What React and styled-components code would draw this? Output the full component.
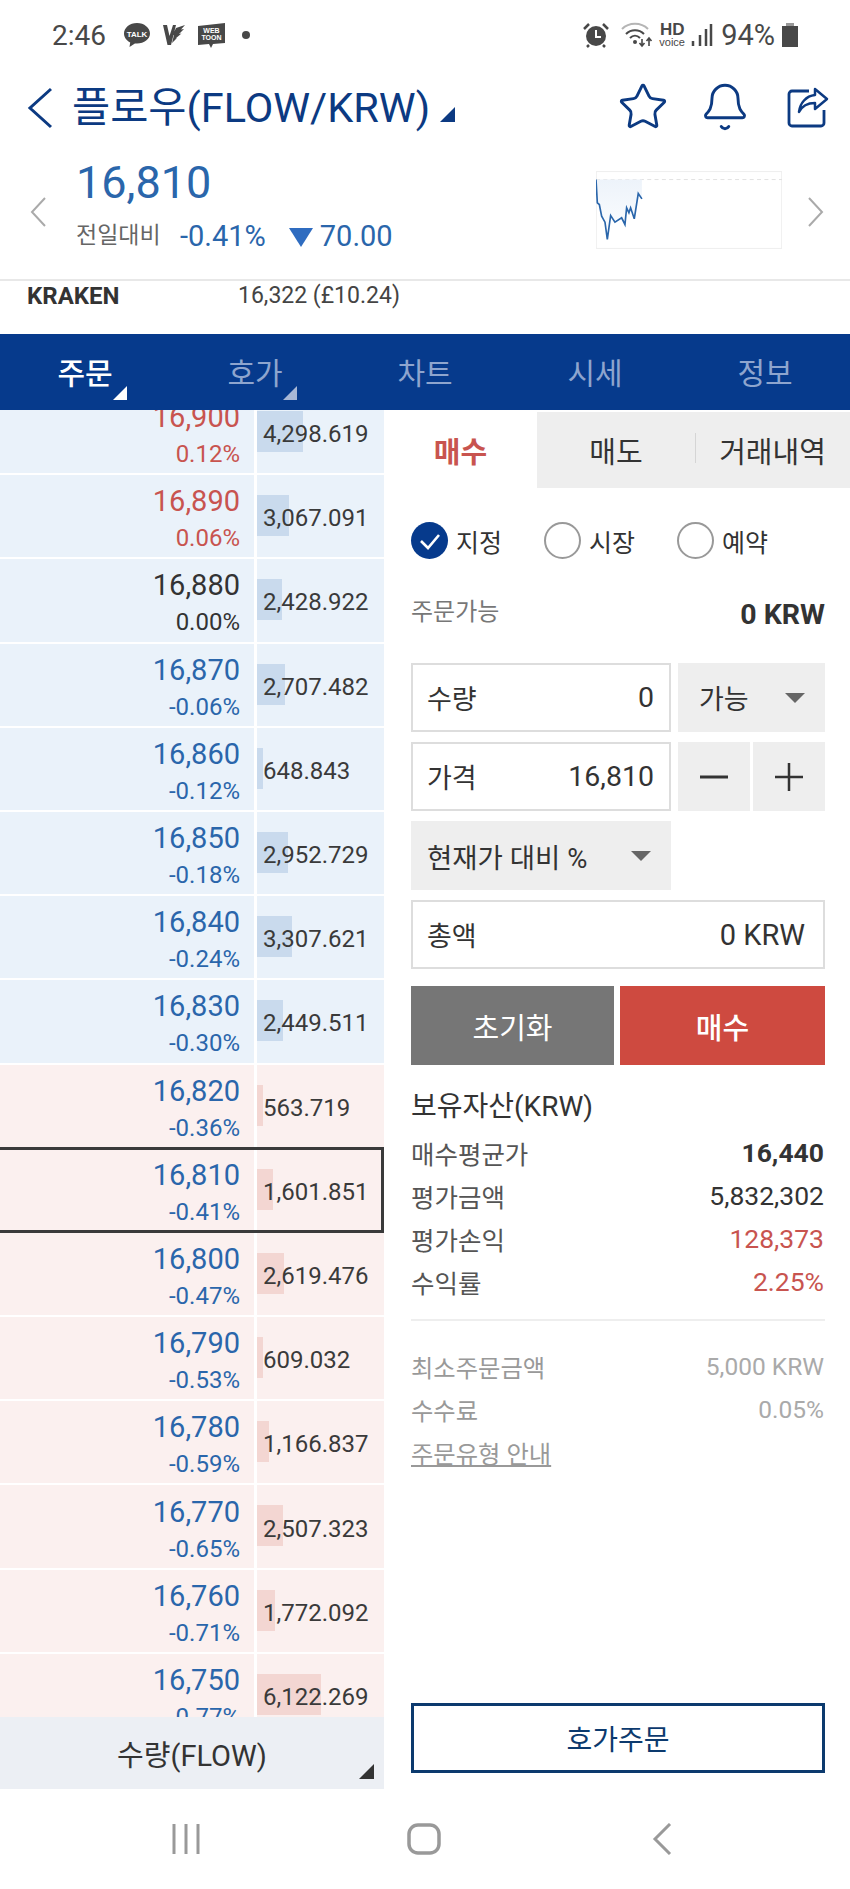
import React from 'react';
import styled, { createGlobalStyle } from 'styled-components';
import { Star, Bell } from 'lucide-react';

const NAVY = '#063a8c';
const BLUE = '#2a66ab';
const RED = '#c8544f';
const FONT = `Roboto, "Noto Sans CJK KR", sans-serif`;

const GlobalStyle = createGlobalStyle`
  html, body { margin: 0; padding: 0; background: #fff; }
  body { font-family: ${FONT}; color: #333; }
  * { box-sizing: border-box; }
`;

const Page = styled.div`
  width: 850px;
  height: 1889px;
  overflow: hidden;
  display: flex;
  flex-direction: column;
  background: #fff;
`;

/* status bar */
const StatusBar = styled.div`
  height: 70px;
  flex: none;
  padding: 0 51px 0 52px;
  display: flex;
  align-items: center;
  justify-content: space-between;
  color: #484848;
`;
const StatusGroup = styled.div`
  display: flex;
  align-items: center;
  gap: ${p => p.$gap || 10}px;
`;
const Clock = styled.span`
  font-size: 28px;
  width: 60px;
`;
const Battery = styled.span`
  font-size: 29px;
  margin-left: 2px;
`;
const HdBadge = styled.div`
  width: 26px;
  display: flex;
  flex-direction: column;
  align-items: center;
  line-height: 1;
  font-family: "Liberation Sans", sans-serif;
  b { font-size: 17px; line-height: 15px; }
  span { font-size: 11px; line-height: 11px; }
`;

/* title */
const TitleBar = styled.div`
  height: 75px;
  flex: none;
  padding: 0 21px 0 27px;
  display: flex;
  align-items: center;
  color: #0c3a82;
`;
const TitleText = styled.h1`
  margin: 0 0 0 19px;
  font-size: 41.5px;
  font-weight: 400;
  line-height: 1;
  white-space: nowrap;
`;
const TitleCaret = styled.span`
  width: 0;
  height: 0;
  margin: 13px 0 0 10px;
  border-left: 15px solid transparent;
  border-bottom: 15px solid #0c3a82;
`;
const TitleActions = styled.div`
  margin-left: auto;
  margin-top: -2px;
  display: flex;
  align-items: center;
  gap: 30px;
`;
const ShareIcon = styled.svg`
  margin-left: 6px;
`;

/* price summary */
const Summary = styled.div`
  height: 136px;
  flex: none;
  border-bottom: 2px solid #e8e8e8;
  padding: 0 26px 0 30px;
  display: flex;
  align-items: center;
`;
const PriceBlock = styled.div`
  margin-left: 29px;
  margin-top: -15px;
`;
const PriceNow = styled.div`
  font-size: 45px;
  line-height: 54px;
  color: ${BLUE};
`;
const PriceChange = styled.div`
  margin-top: 9px;
  display: flex;
  align-items: center;
  font-size: 29px;
  line-height: 34px;
  color: ${BLUE};
`;
const ChangeLabel = styled.span`
  font-size: 23px;
  color: #666;
  width: 104px;
`;
const DownMark = styled.span`
  width: 0;
  height: 0;
  margin: 2px 7px 0 23px;
  border-left: 12px solid transparent;
  border-right: 12px solid transparent;
  border-top: 19px solid #2f6cc0;
`;
const MiniChart = styled.svg`
  width: 186px;
  height: 78px;
  margin: 0 25px 0 auto;
  flex: none;
  position: relative;
  top: -2px;
`;

const Exchange = styled.div`
  height: 53px;
  flex: none;
  padding: 0 0 0 27px;
  display: flex;
  font-size: 23px;
  line-height: 30px;
  color: #444;
`;
const ExchangeName = styled.b`
  width: 211px;
  font-size: 24px;
  font-weight: 700;
  color: #333;
`;

/* tabs */
const MainNav = styled.nav`
  height: 76px;
  flex: none;
  background: ${NAVY};
  display: grid;
  grid-template-columns: repeat(5, 170px);
`;
const NavItem = styled.div`
  position: relative;
  display: flex;
  align-items: center;
  justify-content: center;
  font-size: 30px;
  font-weight: ${p => (p.$active ? 500 : 400)};
  color: ${p => (p.$active ? '#fff' : '#8ea5ce')};
  padding-bottom: 2px;
  &::after {
    content: '';
    display: ${p => (p.$caret ? 'block' : 'none')};
    position: absolute;
    right: 43px;
    bottom: 10px;
    width: 0;
    height: 0;
    border-left: 14px solid transparent;
    border-bottom: 14px solid ${p => (p.$active ? '#fff' : '#a8b8d6')};
  }
`;

const Main = styled.div`
  height: 1379px;
  flex: none;
  display: flex;
`;

/* order book */
const BookColumn = styled.div`
  width: 384px;
  flex: none;
  display: flex;
  flex-direction: column;
`;
const BookList = styled.div`
  flex: 1;
  min-height: 0;
  overflow: hidden;
  padding-top: 1px;
`;
const BookScroll = styled.div`
  margin-top: -20px;
  display: flex;
  flex-direction: column;
  gap: 2px;
`;
const Row = styled.div`
  position: relative;
  height: 82.2px;
  flex: none;
  display: grid;
  grid-template-columns: 254px 127px;
  column-gap: 3px;
  ${p => p.$current && `
    &::after {
      content: '';
      position: absolute;
      inset: -2px 0 -2px -4px;
      border: 3px solid #3a3a3a;
    }
  `}
`;
const PriceCell = styled.div`
  background: ${p => (p.$side === 'ask' ? '#eaf2fa' : '#fbf0ef')};
  color: ${p => ({ up: RED, flat: '#333', down: BLUE }[p.$tone])};
  padding: 8px 14px 0 0;
  text-align: right;
  display: flex;
  flex-direction: column;
  justify-content: center;
`;
const PriceValue = styled.div`
  font-size: 29px;
  line-height: 37px;
`;
const PricePct = styled.div`
  font-size: 24px;
  line-height: 37px;
`;
const QtyCell = styled.div`
  position: relative;
  background: ${p => (p.$side === 'ask' ? '#eaf2fa' : '#fbf0ef')};
  display: flex;
  align-items: center;
  padding: 4px 0 0 6px;
  font-size: 24px;
  color: #3a3a3a;
`;
const QtyBar = styled.div`
  position: absolute;
  left: 0;
  top: 20px;
  height: 41px;
  background: ${p => (p.$side === 'ask' ? '#c9daed' : '#f3d6d2')};
`;
const QtyText = styled.span`
  position: relative;
`;
const BookFooter = styled.div`
  position: relative;
  height: 72px;
  flex: none;
  background: #eceff4;
  display: flex;
  align-items: center;
  justify-content: center;
  font-size: 29px;
  color: #333;
  &::after {
    content: '';
    position: absolute;
    right: 10px;
    bottom: 10px;
    width: 0;
    height: 0;
    border-left: 15px solid transparent;
    border-bottom: 15px solid #333;
  }
`;

/* order form */
const FormColumn = styled.div`
  flex: 1;
  min-width: 0;
  display: flex;
  flex-direction: column;
`;
const Tabs = styled.div`
  height: 76px;
  flex: none;
  margin-top: 2px;
  display: grid;
  grid-template-columns: 153px 158px 155px;
`;
const Tab = styled.div`
  position: relative;
  display: flex;
  align-items: center;
  justify-content: center;
  font-size: 29px;
  background: ${p => (p.$active ? '#fff' : '#eee')};
  color: ${p => (p.$active ? RED : '#333')};
  font-weight: ${p => (p.$active ? 700 : 400)};
  ${p => p.$divided && `
    &::before {
      content: '';
      position: absolute;
      left: 0;
      top: 21px;
      height: 30px;
      width: 1px;
      background: #d5d5d5;
    }
  `}
`;
const FormBody = styled.div`
  flex: 1;
  padding: 34px 25px 16px 27px;
  display: flex;
  flex-direction: column;
`;
const RadioRow = styled.div`
  height: 36px;
  display: grid;
  grid-template-columns: 133px 133px 1fr;
`;
const RadioOption = styled.div`
  display: flex;
  align-items: center;
  gap: 8px;
  font-size: 25px;
  color: #333;
`;
const RadioMark = styled.span`
  width: 37px;
  height: 37px;
  border-radius: 50%;
  flex: none;
  border: ${p => (p.$on ? 'none' : '2px solid #999')};
  background: ${p => (p.$on ? NAVY : '#fff')};
  display: flex;
  align-items: center;
  justify-content: center;
`;
const Available = styled.div`
  height: 40px;
  margin-top: 34px;
  display: flex;
  align-items: center;
  justify-content: space-between;
  font-size: 24px;
  color: #777;
  span { margin-bottom: 6px; }
  b {
    margin-top: 4px;
    font-size: 28.5px;
    color: #333;
    font-weight: 700;
  }
`;
const FieldGrid = styled.div`
  margin-top: 31px;
  display: grid;
  grid-template-columns: 260px 147px;
  grid-auto-rows: 69px;
  gap: 10px 7px;
`;
const Field = styled.div`
  border: 2px solid #ddd;
  padding: 0 ${p => (p.$wide ? 18 : 15)}px 0 14px;
  display: flex;
  align-items: center;
  justify-content: space-between;
  font-size: 27px;
  color: #333;
  grid-column: ${p => (p.$wide ? '1 / -1' : 'auto')};
  span:last-child { font-size: ${p => (p.$wide ? 29 : 28.5)}px; }
`;
const SelectBox = styled.div`
  background: #eee;
  padding: 0 20px 0 ${p => p.$indent || 16}px;
  display: flex;
  align-items: center;
  justify-content: space-between;
  font-size: ${p => p.$size || 27.5}px;
  color: #333;
  &::after {
    content: '';
    width: 0;
    height: 0;
    border-left: 10px solid transparent;
    border-right: 10px solid transparent;
    border-top: 10px solid #666;
  }
`;
const Stepper = styled.div`
  display: grid;
  grid-template-columns: 72px 72px;
  gap: 3px;
`;
const StepButton = styled.div`
  background: #eee;
  display: flex;
  align-items: center;
  justify-content: center;
`;
const ActionRow = styled.div`
  margin-top: 17px;
  height: 79px;
  display: grid;
  grid-template-columns: 203px 205px;
  gap: 6px;
`;
const ActionButton = styled.div`
  background: ${p => (p.$primary ? '#ce4a40' : '#767676')};
  color: #fff;
  font-size: 29px;
  font-weight: ${p => (p.$primary ? 500 : 400)};
  display: flex;
  align-items: center;
  justify-content: center;
`;
const HoldTitle = styled.div`
  margin-top: 24px;
  height: 36px;
  font-size: 28px;
  line-height: 36px;
  color: #333;
`;
const InfoList = styled.div`
  margin-top: ${p => (p.$plain ? 24 : 6)}px;
  padding-bottom: 16px;
  border-bottom: ${p => (p.$plain ? 'none' : '2px solid #eee')};
`;
const InfoRow = styled.div`
  height: 43px;
  display: flex;
  align-items: center;
  justify-content: space-between;
  font-size: ${p => (p.$muted ? 24.3 : 25.5)}px;
  color: ${p => (p.$muted ? '#999' : '#555')};
`;
const InfoValue = styled.span`
  margin-right: 1px;
  font-size: ${p => (p.$muted ? 24.5 : 26.5)}px;
  color: ${p => (p.$tone === 'red' ? RED : p.$muted ? '#aaa' : '#333')};
  font-weight: ${p => (p.$bold ? 700 : 400)};
`;
const GuideLink = styled.span`
  text-decoration: underline;
`;
const BookOrderButton = styled.div`
  margin-top: auto;
  height: 70px;
  border: 3px solid #0c3a6e;
  display: flex;
  align-items: center;
  justify-content: center;
  font-size: 28px;
  color: #0c3a6e;
`;

/* android nav */
const SystemNav = styled.div`
  flex: 1;
  display: grid;
  grid-template-columns: repeat(3, 238px);
  justify-content: center;
  justify-items: center;
  align-items: center;
  padding-right: 2px;
`;

const rows = [
  ['16,900', '0.12%', '4,298.619', 46, 'ask', 'up'],
  ['16,890', '0.06%', '3,067.091', 32, 'ask', 'up'],
  ['16,880', '0.00%', '2,428.922', 25, 'ask', 'flat'],
  ['16,870', '-0.06%', '2,707.482', 28, 'ask', 'down'],
  ['16,860', '-0.12%', '648.843', 6, 'ask', 'down'],
  ['16,850', '-0.18%', '2,952.729', 31, 'ask', 'down'],
  ['16,840', '-0.24%', '3,307.621', 35, 'ask', 'down'],
  ['16,830', '-0.30%', '2,449.511', 26, 'ask', 'down'],
  ['16,820', '-0.36%', '563.719', 6, 'bid', 'down'],
  ['16,810', '-0.41%', '1,601.851', 16, 'bid', 'down'],
  ['16,800', '-0.47%', '2,619.476', 27, 'bid', 'down'],
  ['16,790', '-0.53%', '609.032', 6, 'bid', 'down'],
  ['16,780', '-0.59%', '1,166.837', 12, 'bid', 'down'],
  ['16,770', '-0.65%', '2,507.323', 26, 'bid', 'down'],
  ['16,760', '-0.71%', '1,772.092', 18, 'bid', 'down'],
  ['16,750', '-0.77%', '6,122.269', 64, 'bid', 'down'],
];

const chartPoints = '48,60 52,130 58,135 65,170 75,188 82,240 92,168 105,188 125,175 135,195 140,145 147,160 152,145 163,178 175,102 186,118';

const App = () => (
  <Page>
    <GlobalStyle />
    <StatusBar>
      <StatusGroup $gap={11}>
        <Clock>2:46</Clock>
        <svg width="28" height="26" viewBox="0 0 28 26">
          <path d="M14 1C6.8 1 1 5.7 1 11.5c0 3.8 2.5 7 6.2 8.9L6.5 25l5.4-3.6c.7.1 1.4.1 2.1.1 7.2 0 13-4.500 13-10S21.200 1 14 1z" fill="#484848" />
          <text x="14" y="15" textAnchor="middle" fontSize="8" fontWeight="700" fill="#fff" fontFamily="Liberation Sans">TALK</text>
        </svg>
        <svg width="24" height="24" viewBox="0 0 24 24">
          <path d="M1 2h4l2.500 11L11 2h3l-5 20H5.500zM14 5l9-3-4 4.500 3-.5-5 5 2.500-.5-6 5 1.500-.5-5 5 2-8-1.500.5z" fill="#484848" />
        </svg>
        <svg width="29" height="27" viewBox="0 0 29 27">
          <path d="M1 4l27-3v20l-12 1-2 4-2-4-11 1z" fill="#484848" />
          <text x="14.500" y="11" textAnchor="middle" fontSize="7" fontWeight="700" fill="#fff" fontFamily="Liberation Sans">WEB</text>
          <text x="14.500" y="18" textAnchor="middle" fontSize="7" fontWeight="700" fill="#fff" fontFamily="Liberation Sans">TOON</text>
        </svg>
        <svg width="10" height="10" viewBox="0 0 10 10" style={{ marginLeft: 4 }}>
          <circle cx="5" cy="5" r="4" fill="#484848" />
        </svg>
      </StatusGroup>
      <StatusGroup $gap={6}>
        <svg width="26" height="26" viewBox="0 0 26 26">
          <circle cx="13" cy="14" r="10" fill="#484848" />
          <path d="M13 8v7h5" stroke="#fff" strokeWidth="2" fill="none" />
          <path d="M1 7l5-5M25 7l-5-5M6 23l-2 2M20 23l2 2" stroke="#484848" strokeWidth="2.500" />
        </svg>
        <svg width="32" height="26" viewBox="0 0 32 26" style={{ marginLeft: 6 }}>
          <path d="M1 7c7-7 19-7 26 0" stroke="#b5b5b5" strokeWidth="2" fill="none" />
          <path d="M5 12c5-5 13-5 18 0M9 16c3-3 7-3 10 0" stroke="#484848" strokeWidth="2" fill="none" />
          <circle cx="14" cy="20" r="2" fill="#484848" />
          <path d="M21 17v7M18.500 21l2.500 3 2.500-3M28 24v-8M25.500 19l2.500-3 2.500 3" stroke="#484848" strokeWidth="1.600" fill="none" />
        </svg>
        <HdBadge><b>HD</b><span>voice</span></HdBadge>
        <svg width="22" height="24" viewBox="0 0 22 24">
          <path d="M2 18v5M9 12v11M15 6v17M20 1v22" stroke="#484848" strokeWidth="2.500" />
        </svg>
        <Battery>94%</Battery>
        <svg width="18" height="26" viewBox="0 0 18 26">
          <path d="M5 1h8v3H5z" fill="#999" />
          <rect x="1" y="4" width="16" height="21" fill="#484848" />
        </svg>
      </StatusGroup>
    </StatusBar>

    <TitleBar>
      <svg width="26" height="42" viewBox="0 0 26 42">
        <path d="M24 2L3 21l21 19" stroke="#0c3a82" strokeWidth="3" fill="none" />
      </svg>
      <TitleText>플로우(FLOW/KRW)</TitleText>
      <TitleCaret />
      <TitleActions>
        <Star size={52} strokeWidth={1.35} color="#0c3a82" />
        <Bell size={52} strokeWidth={1.35} color="#0c3a82" />
        <ShareIcon width="42" height="42" viewBox="0 0 42 42">
          <path d="M22 5H5a3 3 0 0 0-3 3v29a3 3 0 0 0 3 3h29a3 3 0 0 0 3-3V24" stroke="#0c3a82" strokeWidth="2.800" fill="none" />
          <path d="M28 3l12 10-12 10v-6c-8 0-13 3-16 9 1-9 7-16 16-17z" stroke="#0c3a82" strokeWidth="2.500" fill="none" strokeLinejoin="round" />
        </ShareIcon>
      </TitleActions>
    </TitleBar>

    <Summary>
      <svg width="17" height="30" viewBox="0 0 17 30">
        <path d="M15 1L2 15l13 14" stroke="#aaa" strokeWidth="2" fill="none" />
      </svg>
      <PriceBlock>
        <PriceNow>16,810</PriceNow>
        <PriceChange>
          <ChangeLabel>전일대비</ChangeLabel>
          <span>-0.41%</span>
          <DownMark />
          <span>70.00</span>
        </PriceChange>
      </PriceBlock>
      <MiniChart viewBox="48 35 559 233">
        <defs>
          <linearGradient id="chartFill" x1="0" y1="0" x2="0" y2="1">
            <stop offset="0" stopColor="#edf3fa" />
            <stop offset="1" stopColor="#fdfeff" />
          </linearGradient>
        </defs>
        <rect x="49" y="36" width="557" height="231" fill="none" stroke="#eee" strokeWidth="3" />
        <path d="M48 60H607" stroke="#e2e2e2" strokeWidth="3" strokeDasharray="12 10" />
        <polygon points={`48,60 ${chartPoints} 186,60`} fill="url(#chartFill)" />
        <polyline points={chartPoints} fill="none" stroke="#2a66ab" strokeWidth="5" />
      </MiniChart>
      <svg width="17" height="30" viewBox="0 0 17 30">
        <path d="M2 1l13 14L2 29" stroke="#aaa" strokeWidth="2" fill="none" />
      </svg>
    </Summary>

    <Exchange>
      <ExchangeName>KRAKEN</ExchangeName>
      <span>16,322 (£10.24)</span>
    </Exchange>

    <MainNav>
      <NavItem $active $caret>주문</NavItem>
      <NavItem $caret>호가</NavItem>
      <NavItem>차트</NavItem>
      <NavItem>시세</NavItem>
      <NavItem>정보</NavItem>
    </MainNav>

    <Main>
      <BookColumn>
        <BookList>
          <BookScroll>
            {rows.map(([price, pct, qty, bar, side, tone]) => (
              <Row key={price} $current={price === '16,810'}>
                <PriceCell $side={side} $tone={tone}>
                  <PriceValue>{price}</PriceValue>
                  <PricePct>{pct}</PricePct>
                </PriceCell>
                <QtyCell $side={side}>
                  <QtyBar $side={side} style={{ width: bar }} />
                  <QtyText>{qty}</QtyText>
                </QtyCell>
              </Row>
            ))}
          </BookScroll>
        </BookList>
        <BookFooter>수량(FLOW)</BookFooter>
      </BookColumn>

      <FormColumn>
        <Tabs>
          <Tab $active>매수</Tab>
          <Tab>매도</Tab>
          <Tab $divided>거래내역</Tab>
        </Tabs>
        <FormBody>
          <RadioRow>
            <RadioOption>
              <RadioMark $on>
                <svg width="22" height="18" viewBox="0 0 22 18">
                  <path d="M2 9l7 7L20 3" stroke="#fff" strokeWidth="2.600" fill="none" />
                </svg>
              </RadioMark>
              지정
            </RadioOption>
            <RadioOption><RadioMark />시장</RadioOption>
            <RadioOption><RadioMark />예약</RadioOption>
          </RadioRow>
          <Available>
            <span>주문가능</span>
            <b>0 KRW</b>
          </Available>
          <FieldGrid>
            <Field><span>수량</span><span>0</span></Field>
            <SelectBox $indent={21} $size={27}>가능</SelectBox>
            <Field><span>가격</span><span>16,810</span></Field>
            <Stepper>
              <StepButton>
                <svg width="28" height="4" viewBox="0 0 28 4"><path d="M0 2h28" stroke="#333" strokeWidth="3" /></svg>
              </StepButton>
              <StepButton>
                <svg width="28" height="28" viewBox="0 0 28 28"><path d="M0 14h28M14 0v28" stroke="#333" strokeWidth="2.500" /></svg>
              </StepButton>
            </Stepper>
            <SelectBox>현재가 대비 %</SelectBox>
            <div />
            <Field $wide><span>총액</span><span>0 KRW</span></Field>
          </FieldGrid>
          <ActionRow>
            <ActionButton>초기화</ActionButton>
            <ActionButton $primary>매수</ActionButton>
          </ActionRow>
          <HoldTitle>보유자산(KRW)</HoldTitle>
          <InfoList>
            <InfoRow><span>매수평균가</span><InfoValue $bold>16,440</InfoValue></InfoRow>
            <InfoRow><span>평가금액</span><InfoValue>5,832,302</InfoValue></InfoRow>
            <InfoRow><span>평가손익</span><InfoValue $tone="red">128,373</InfoValue></InfoRow>
            <InfoRow><span>수익률</span><InfoValue $tone="red">2.25%</InfoValue></InfoRow>
          </InfoList>
          <InfoList $plain>
            <InfoRow $muted><span>최소주문금액</span><InfoValue $muted>5,000 KRW</InfoValue></InfoRow>
            <InfoRow $muted><span>수수료</span><InfoValue $muted>0.05%</InfoValue></InfoRow>
            <InfoRow $muted><GuideLink>주문유형 안내</GuideLink></InfoRow>
          </InfoList>
          <BookOrderButton>호가주문</BookOrderButton>
        </FormBody>
      </FormColumn>
    </Main>

    <SystemNav>
      <svg width="30" height="32" viewBox="0 0 30 32">
        <path d="M3 1v30M15 1v30M27 1v30" stroke="#999" strokeWidth="3" />
      </svg>
      <svg width="34" height="32" viewBox="0 0 34 32">
        <rect x="2" y="2" width="30" height="28" rx="9" stroke="#999" strokeWidth="3.500" fill="none" />
      </svg>
      <svg width="20" height="32" viewBox="0 0 20 32">
        <path d="M18 1L3 16l15 15" stroke="#999" strokeWidth="3" fill="none" />
      </svg>
    </SystemNav>
  </Page>
);

export default App;
